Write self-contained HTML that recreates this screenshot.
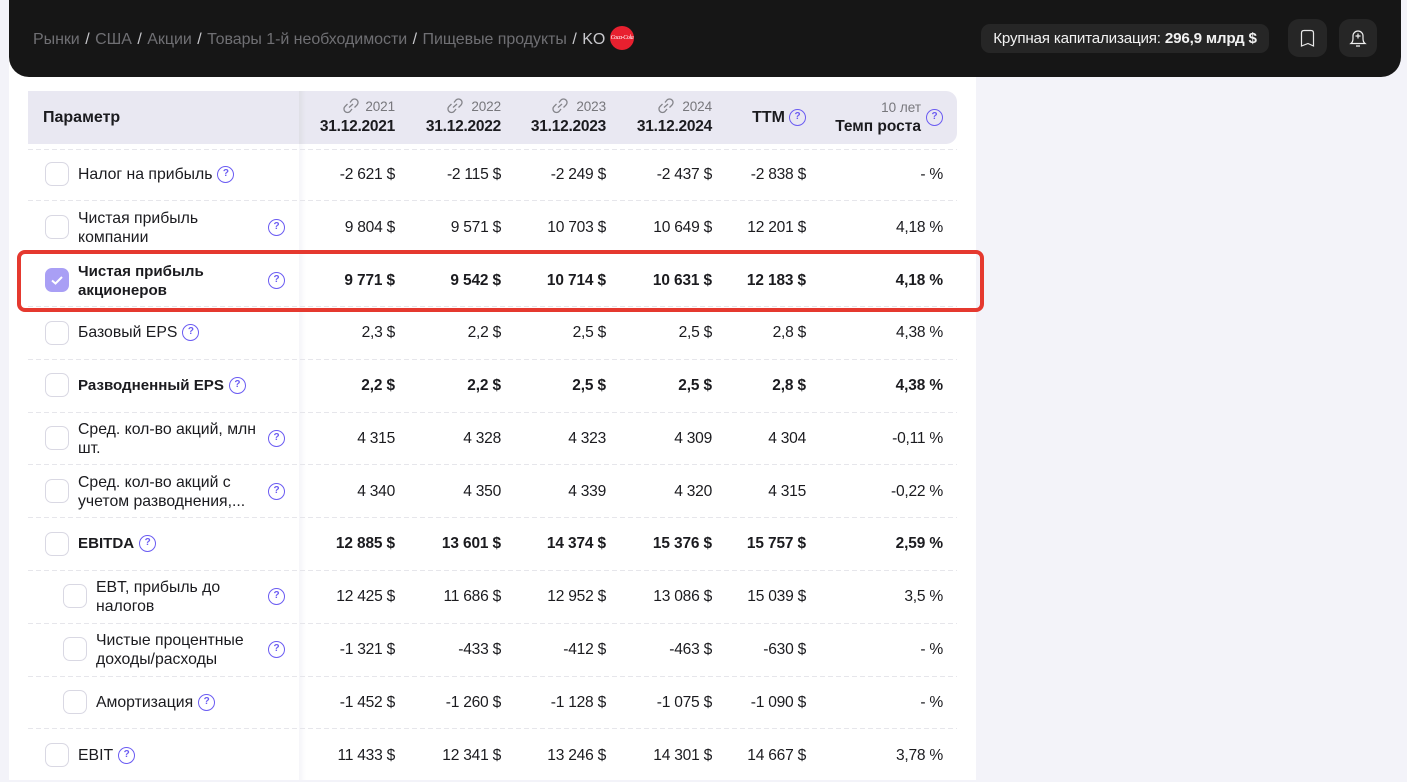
<!DOCTYPE html>
<html lang="ru"><head><meta charset="utf-8"><title>KO</title>
<style>
*{box-sizing:border-box}
html,body{margin:0;padding:0}
body{width:1407px;height:780px;overflow:hidden;background:#f3f3f9;position:relative;font-family:"Liberation Sans",sans-serif;color:#1b1b1f;font-size:15px}
.abs{position:absolute}
#panel{left:9px;top:0;width:967px;height:780px;background:#fff}
#shadow{left:299px;top:91px;width:7px;height:689px;background:linear-gradient(90deg,#f5f5f9,#fff)}
#top{left:9px;top:0;width:1392px;height:77px;background:#161616;border-radius:0 0 20px 20px}
#crumbs{left:33px;top:29px;line-height:21px;font-size:16px;white-space:nowrap;color:#c8c8cc;letter-spacing:-.05px}
#crumbs b{font-weight:400;color:#6f6f73}
#crumbs i{font-style:normal;margin:0 1.1px}
#logo{left:610px;top:26px;width:24px;height:24px;border-radius:50%;background:#e8202f;color:#fff;font:italic 6px/24px "Liberation Serif",serif;text-align:center;letter-spacing:-.4px;white-space:nowrap;overflow:hidden}
#cap{left:981px;top:24px;width:288px;height:29px;border-radius:9px;background:#262626;color:#f2f2f2;font-size:15.2px;line-height:30px;text-align:center;white-space:nowrap;letter-spacing:-.2px}
.btn{top:19px;height:38px;border-radius:11px;background:#262626}
.btn svg{position:absolute;left:0;top:0}
#head{left:28px;top:91px;width:929px;height:53px;background:#e9e8f2;border-radius:0 11px 11px 0}
#headshade{left:299px;top:91px;width:7px;height:53px;background:linear-gradient(90deg,#dfdfe6,#e9e8f2)}
.h{position:absolute;white-space:nowrap;text-align:right}
.yr{color:#77777c;font-size:13.5px;line-height:16px;top:99px;letter-spacing:-.1px}
.dt{font-weight:700;line-height:18px;top:118px;font-size:15.5px;letter-spacing:-.25px}
.ln{top:96px}
.dash{position:absolute;left:28px;width:929px;height:1px;background:repeating-linear-gradient(90deg,#e6e6eb 0 5px,transparent 5px 8px)}
.r{position:absolute;left:28px;width:929px;height:52px;line-height:52px;font-size:15.6px;letter-spacing:-.25px}
.r.b{font-weight:700;font-size:15.4px;letter-spacing:-.1px}
.cb{position:absolute;left:17px;top:14px;width:24px;height:24px;border:1px solid #d9d8e3;border-radius:7px;background:#fff}
.l{position:absolute;left:50px;top:0;width:186px;line-height:19.5px;display:flex;align-items:center;height:52px;white-space:nowrap;font-size:15.8px;letter-spacing:0}
.b .l{font-size:15.1px;letter-spacing:0}
.l span{display:block;position:relative;top:1px}
.in .cb{left:35px}
.in .l{left:68px}
.q{display:inline-block;width:17px;height:17px;border:1.4px solid #6b5cf2;border-radius:50%;color:#6b5cf2;font:700 10px/14.5px "Liberation Sans",sans-serif;text-align:center;background:transparent;flex:none;letter-spacing:0}
.l .q{margin-left:5px}
.r>.q{position:absolute;left:240px;top:18px}
.c{position:absolute;top:1px;white-space:nowrap;text-align:right}
.c1{right:562px}.c2{right:456px}.c3{right:351px}.c4{right:245px}.c5{right:151px}.c6{right:14px}
#frame{left:17px;top:250px;width:967px;height:62px;border:4px solid #e5392f;border-radius:8px}
</style></head><body>
<div class="abs" id="panel"></div>
<div class="abs" id="shadow"></div>
<div class="abs" id="top"></div>
<div class="abs" id="crumbs"><b>Рынки</b> <i>/</i> <b>США</b> <i>/</i> <b>Акции</b> <i>/</i> <b>Товары 1-й необходимости</b> <i>/</i> <b>Пищевые продукты</b> <i>/</i> KO</div>
<div class="abs" id="logo">Coca-Cola</div>
<div class="abs" id="cap">Крупная капитализация: <strong>296,9 млрд $</strong></div>
<div class="abs btn" style="left:1288px;width:39px"><svg width="39" height="38" fill="none" stroke="#e8e8e8" stroke-width="1.2"><path d="M13.500 14q0-2.500 2.500-2.500h7q2.500 0 2.500 2.500V27L20 24.500 13.500 27Z"/></svg></div>
<div class="abs btn" style="left:1339px;width:38px"><svg width="38" height="38" fill="none" stroke="#f0f0f0" stroke-width="1.2"><path d="M12 24.500q2-1.500 2-5v-2.500a5 5 0 0 1 10 0v2.500q0 3.500 2 5Z"/><path d="M17 27h4M19 14.500v5M16.500 17h5"/></svg></div>

<div class="abs" id="head"></div>
<div class="abs" id="headshade"></div>
<div class="h" style="left:43px;top:109px;font-weight:700;font-size:16px;line-height:18px">Параметр</div>

<svg class="h ln" style="left:341px" width="20" height="20" fill="none" stroke="#85858b" stroke-width="1.3"><path d="M9 6.500 11 4a3.500 3.500 0 0 1 5 5l-2.500 2.500M11 13l-2 2.500a3.500 3.500 0 0 1-5-5L6.500 8M8 11.500 12 8"/></svg>
<div class="h yr" style="right:1012px">2021</div><div class="h dt" style="right:1012px">31.12.2021</div>
<svg class="h ln" style="left:445px" width="20" height="20" fill="none" stroke="#85858b" stroke-width="1.3"><path d="M9 6.500 11 4a3.500 3.500 0 0 1 5 5l-2.500 2.500M11 13l-2 2.500a3.500 3.500 0 0 1-5-5L6.500 8M8 11.500 12 8"/></svg>
<div class="h yr" style="right:906px">2022</div><div class="h dt" style="right:906px">31.12.2022</div>
<svg class="h ln" style="left:550px" width="20" height="20" fill="none" stroke="#85858b" stroke-width="1.3"><path d="M9 6.500 11 4a3.500 3.500 0 0 1 5 5l-2.500 2.500M11 13l-2 2.500a3.500 3.500 0 0 1-5-5L6.500 8M8 11.500 12 8"/></svg>
<div class="h yr" style="right:801px">2023</div><div class="h dt" style="right:801px">31.12.2023</div>
<svg class="h ln" style="left:656px" width="20" height="20" fill="none" stroke="#85858b" stroke-width="1.3"><path d="M9 6.500 11 4a3.500 3.500 0 0 1 5 5l-2.500 2.500M11 13l-2 2.500a3.500 3.500 0 0 1-5-5L6.500 8M8 11.500 12 8"/></svg>
<div class="h yr" style="right:695px">2024</div><div class="h dt" style="right:695px">31.12.2024</div>
<div class="h" style="right:622px;top:109px;font-weight:700;font-size:16px;line-height:18px">TTM</div>
<span class="q abs" style="left:789px;top:109px">?</span>
<div class="h" style="right:486px;top:100px;color:#77777c;font-size:13.5px;line-height:15px">10 лет</div>
<div class="h" style="right:486px;top:118px;font-weight:700;font-size:15.5px;line-height:18px">Темп роста</div>
<span class="q abs" style="left:926px;top:109px">?</span>

<div class="dash" style="top:149px"></div>
<div class="dash" style="top:200px"></div>
<div class="dash" style="top:253px"></div>
<div class="dash" style="top:306px"></div>
<div class="dash" style="top:359px"></div>
<div class="dash" style="top:412px"></div>
<div class="dash" style="top:464px"></div>
<div class="dash" style="top:517px"></div>
<div class="dash" style="top:570px"></div>
<div class="dash" style="top:623px"></div>
<div class="dash" style="top:676px"></div>
<div class="dash" style="top:728px"></div>

<div class="r" style="top:148px"><i class="cb"></i><div class="l"><span>Налог на прибыль</span><b class="q">?</b></div><div class="c c1">-2 621 $</div><div class="c c2">-2 115 $</div><div class="c c3">-2 249 $</div><div class="c c4">-2 437 $</div><div class="c c5">-2 838 $</div><div class="c c6">- %</div></div>
<div class="r" style="top:201px"><i class="cb"></i><div class="l"><span>Чистая прибыль<br>компании</span></div><b class="q">?</b><div class="c c1">9 804 $</div><div class="c c2">9 571 $</div><div class="c c3">10 703 $</div><div class="c c4">10 649 $</div><div class="c c5">12 201 $</div><div class="c c6">4,18 %</div></div>
<div class="r b" style="top:254px"><i class="cb" style="background:#a99ff5;border-color:#a99ff5"><svg width="22" height="22" fill="none" stroke="#fff" stroke-width="2" style="position:absolute;left:0;top:0"><path d="M6 11.500l3.500 3 6.500-6.500"/></svg></i><div class="l"><span>Чистая прибыль<br>акционеров</span></div><b class="q">?</b><div class="c c1">9 771 $</div><div class="c c2">9 542 $</div><div class="c c3">10 714 $</div><div class="c c4">10 631 $</div><div class="c c5">12 183 $</div><div class="c c6">4,18 %</div></div>
<div class="r" style="top:306px"><i class="cb" style="top:15px"></i><div class="l"><span>Базовый EPS</span><b class="q">?</b></div><div class="c c1">2,3 $</div><div class="c c2">2,2 $</div><div class="c c3">2,5 $</div><div class="c c4">2,5 $</div><div class="c c5">2,8 $</div><div class="c c6">4,38 %</div></div>
<div class="r b" style="top:359px"><i class="cb"></i><div class="l"><span>Разводненный EPS</span><b class="q">?</b></div><div class="c c1">2,2 $</div><div class="c c2">2,2 $</div><div class="c c3">2,5 $</div><div class="c c4">2,5 $</div><div class="c c5">2,8 $</div><div class="c c6">4,38 %</div></div>
<div class="r" style="top:412px"><i class="cb"></i><div class="l"><span>Сред. кол-во акций, млн<br>шт.</span></div><b class="q">?</b><div class="c c1">4 315</div><div class="c c2">4 328</div><div class="c c3">4 323</div><div class="c c4">4 309</div><div class="c c5">4 304</div><div class="c c6">-0,11 %</div></div>
<div class="r" style="top:465px"><i class="cb"></i><div class="l"><span>Сред. кол-во акций с<br>учетом разводнения,...</span></div><b class="q">?</b><div class="c c1">4 340</div><div class="c c2">4 350</div><div class="c c3">4 339</div><div class="c c4">4 320</div><div class="c c5">4 315</div><div class="c c6">-0,22 %</div></div>
<div class="r b" style="top:517px"><i class="cb" style="top:15px"></i><div class="l"><span>EBITDA</span><b class="q">?</b></div><div class="c c1">12 885 $</div><div class="c c2">13 601 $</div><div class="c c3">14 374 $</div><div class="c c4">15 376 $</div><div class="c c5">15 757 $</div><div class="c c6">2,59 %</div></div>
<div class="r in" style="top:570px"><i class="cb"></i><div class="l"><span>EBT, прибыль до<br>налогов</span></div><b class="q">?</b><div class="c c1">12 425 $</div><div class="c c2">11 686 $</div><div class="c c3">12 952 $</div><div class="c c4">13 086 $</div><div class="c c5">15 039 $</div><div class="c c6">3,5 %</div></div>
<div class="r in" style="top:623px"><i class="cb"></i><div class="l"><span>Чистые процентные<br>доходы/расходы</span></div><b class="q">?</b><div class="c c1">-1 321 $</div><div class="c c2">-433 $</div><div class="c c3">-412 $</div><div class="c c4">-463 $</div><div class="c c5">-630 $</div><div class="c c6">- %</div></div>
<div class="r in" style="top:676px"><i class="cb"></i><div class="l"><span>Амортизация</span><b class="q">?</b></div><div class="c c1">-1 452 $</div><div class="c c2">-1 260 $</div><div class="c c3">-1 128 $</div><div class="c c4">-1 075 $</div><div class="c c5">-1 090 $</div><div class="c c6">- %</div></div>
<div class="r" style="top:729px"><i class="cb"></i><div class="l"><span>EBIT</span><b class="q">?</b></div><div class="c c1">11 433 $</div><div class="c c2">12 341 $</div><div class="c c3">13 246 $</div><div class="c c4">14 301 $</div><div class="c c5">14 667 $</div><div class="c c6">3,78 %</div></div>

<div class="abs" id="frame"></div>
</body></html>
